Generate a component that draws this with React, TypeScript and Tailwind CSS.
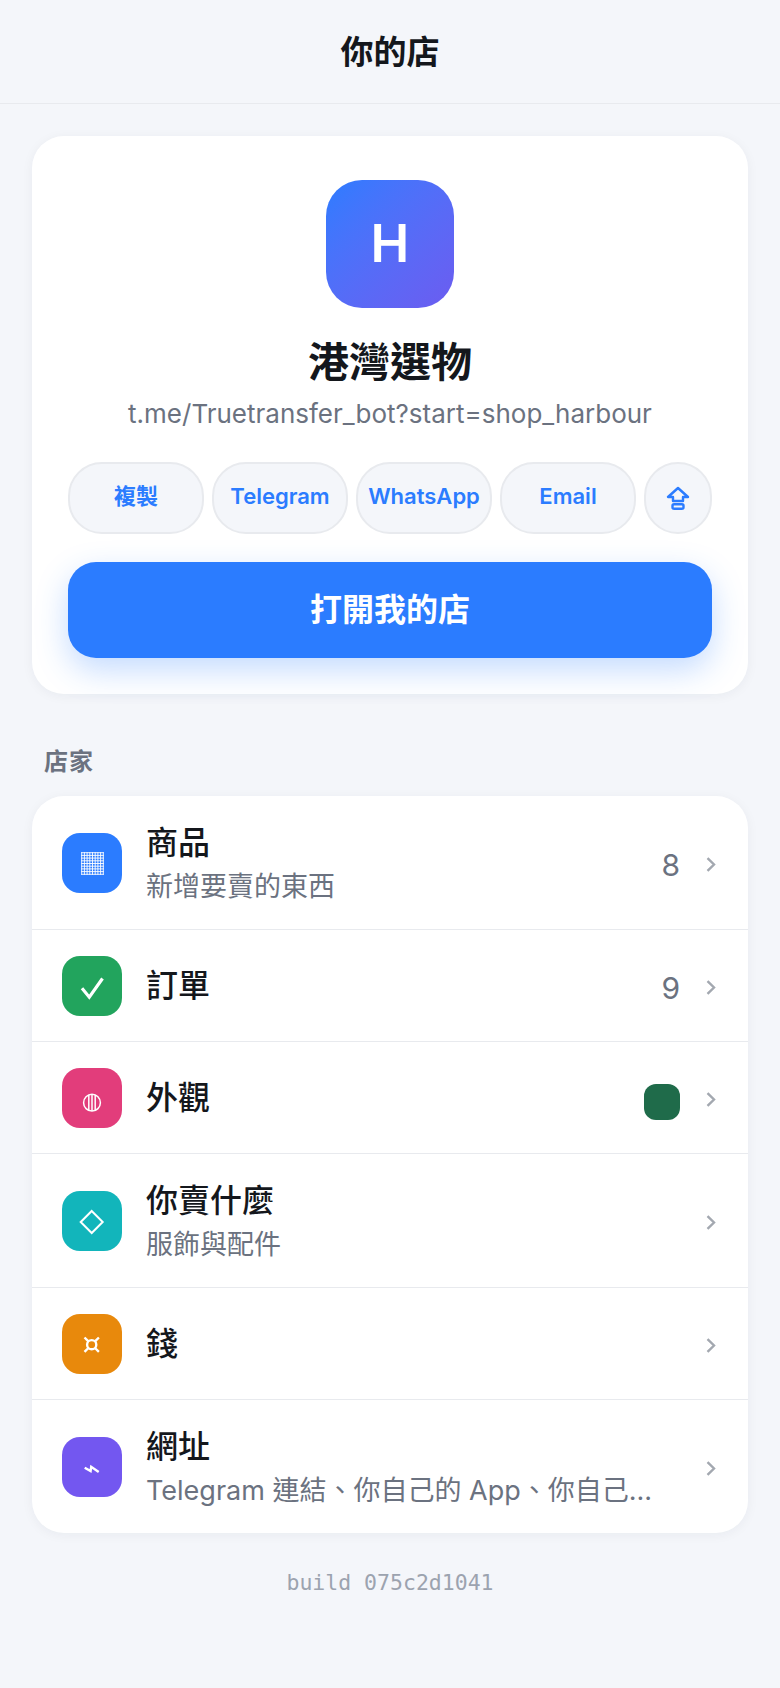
import React from "react";

const FONT = "[font-family:Inter,'Noto_Sans_CJK_TC','Noto_Sans',sans-serif]";

interface Row {
  id: string;
  icon: React.ReactNode;
  iconBg: string;
  title: string;
  sub?: string;
  count?: string;
  swatch?: boolean;
}

// grid lines for the products tile
const gridLines = [19.7, 22.4, 25.1, 27.8, 30.5, 33.2, 35.9, 38.6, 41.3];

const rows: Row[] = [
  {
    id: "products",
    iconBg: "bg-[#2b7cff]",
    title: "商品",
    sub: "新增要賣的東西",
    count: "8",
    icon: (
      <g stroke="#fff" strokeWidth="0.9">
        {gridLines.map((p) => (
          <React.Fragment key={p}>
            <line x1={p} y1="19.2" x2={p} y2="41.8" />
            <line x1="19.2" y1={p} x2="41.8" y2={p} />
          </React.Fragment>
        ))}
      </g>
    ),
  },
  {
    id: "orders",
    iconBg: "bg-[#22a45d]",
    title: "訂單",
    count: "9",
    icon: <path d="M20 32.3 27.3 41.2 40.5 22.5" fill="none" stroke="#fff" strokeWidth="3.2" />,
  },
  {
    id: "look",
    iconBg: "bg-[#e23d7b]",
    title: "外觀",
    swatch: true,
    icon: (
      <g fill="none" stroke="#fff" strokeWidth="1.5">
        <circle cx="30" cy="34.7" r="8.4" />
        <path d="M26.8 27v15.4M30 26.3v16.8M33.2 27v15.4" />
      </g>
    ),
  },
  {
    id: "sell",
    iconBg: "bg-[#12b5bb]",
    title: "你賣什麼",
    sub: "服飾與配件",
    icon: <path d="M29.7 20 40.7 31 29.7 42 18.7 31Z" fill="none" stroke="#fff" strokeWidth="2" />,
  },
  {
    id: "money",
    iconBg: "bg-[#e8890c]",
    title: "錢",
    icon: (
      <g fill="none" stroke="#fff" strokeWidth="2.4">
        <circle cx="29.7" cy="30.7" r="4.6" />
        <path d="M22.5 23.5 26.4 27.4M36.9 23.5 33 27.4M22.5 37.9 26.4 34M36.9 37.9 33 34" />
      </g>
    ),
  },
  {
    id: "url",
    iconBg: "bg-[#7357f0]",
    title: "網址",
    sub: "Telegram 連結、你自己的 App、你自己...",
    icon: <path d="M22.7 30.7 28.6 34 29.2 29.8 36.7 35" fill="none" stroke="#fff" strokeWidth="2.4" />,
  },
];

const chips = ["複製", "Telegram", "WhatsApp", "Email"];

function ListRow({ row }: { row: Row }) {
  return (
    <div className="flex items-center border-b border-[#e8eaee] pl-[30px] pr-8 last:border-b-0">
      <div className={`h-[60px] w-[60px] shrink-0 rounded-[18px] ${row.iconBg}`}>
        <svg viewBox="0 0 60 60" className="h-[60px] w-[60px]">
          {row.icon}
        </svg>
      </div>
      {row.sub ? (
        <div className="ml-6 min-w-0 flex-1 pb-[23px] pt-[26px]">
          <div className="text-[32px] font-medium leading-[42px] text-[#14171c]">{row.title}</div>
          <div className="mt-[3px] whitespace-nowrap text-[27px] leading-[39px] text-[#6b7280]">{row.sub}</div>
        </div>
      ) : (
        <div className="ml-6 flex h-[111px] min-w-0 flex-1 items-center text-[32px] font-medium text-[#14171c]">{row.title}</div>
      )}
      {row.count && <span className="ml-3 mt-1 text-[30px] leading-none text-[#6b7280]">{row.count}</span>}
      {row.swatch && <span className="ml-3 mt-2 h-9 w-9 rounded-xl bg-[#1f6b4a]" />}
      <svg viewBox="0 0 10 15" className="ml-[26px] mt-1 h-[15px] w-[10px] shrink-0">
        <path d="M1.5 1.2 8 7.5 1.5 13.8" fill="none" stroke="#a3a8b0" strokeWidth="2.4" />
      </svg>
    </div>
  );
}

export default function App() {
  return (
    <div className={`min-h-screen bg-[#f4f6fa] ${FONT}`}>
      <header className="flex h-[104px] items-center justify-center border-b border-[#e8eaee] pt-[2px]">
        <h1 className="text-[33px] font-bold text-[#14171c]">你的店</h1>
      </header>

      <main className="px-8 pt-8">
        <section className="flex flex-col items-center rounded-[32px] bg-white px-9 pb-9 pt-11 shadow-[0_2px_12px_rgba(20,30,60,0.05)]">
          <div className="flex h-32 w-32 items-center justify-center rounded-[36px] bg-linear-to-br from-[#2b7cff] to-[#6b5cf0] text-[52px] font-semibold text-white">
            H
          </div>
          <h2 className="mt-[26px] text-[41px] font-bold leading-[56px] text-[#14171c]">港灣選物</h2>
          <p className="mt-[5px] text-[26px] leading-[38px] text-[#6b7280]">t.me/Truetransfer_bot?start=shop_harbour</p>

          <div className="mt-[29px] flex w-full gap-2">
            {chips.map((chip) => (
              <button key={chip} className="h-[72px] w-[136px] rounded-[34px] border-2 border-[#e8eaee] bg-[#f4f6fa] pb-[3px] text-[22px] font-semibold text-[#2b7cff]">
                {chip}
              </button>
            ))}
            <button className="flex h-[72px] w-[68px] items-center justify-center rounded-[34px] border-2 border-[#e8eaee] bg-[#f4f6fa] pb-[1px]">
              <svg viewBox="0 0 24 24" className="h-6 w-6" fill="none" stroke="#2b7cff" strokeWidth="2.4" strokeLinejoin="round">
                <path d="M12 2 2 11H7V15H17V11H22Z" />
                <rect x="6.5" y="18.2" width="11" height="4.6" rx="1.6" />
              </svg>
            </button>
          </div>

          <button className="mt-7 h-24 w-full rounded-[28px] bg-[#2b7cff] text-[32px] font-bold text-white shadow-[0_12px_32px_rgba(43,124,255,0.28)]">
            打開我的店
          </button>
        </section>

        <h3 className="mb-[17px] ml-3 mt-[51px] text-[24px] font-semibold leading-[34px] tracking-[1px] text-[#6b7280]">店家</h3>

        <section className="overflow-hidden rounded-[32px] bg-white shadow-[0_2px_12px_rgba(20,30,60,0.05)]">
          {rows.map((row) => (
            <ListRow key={row.id} row={row} />
          ))}
        </section>

        <p className="mt-[34px] text-center text-[21.5px] text-[#9ca3af] [font-family:'DejaVu_Sans_Mono','Liberation_Mono',monospace]">
          build 075c2d1041
        </p>
      </main>
    </div>
  );
}
